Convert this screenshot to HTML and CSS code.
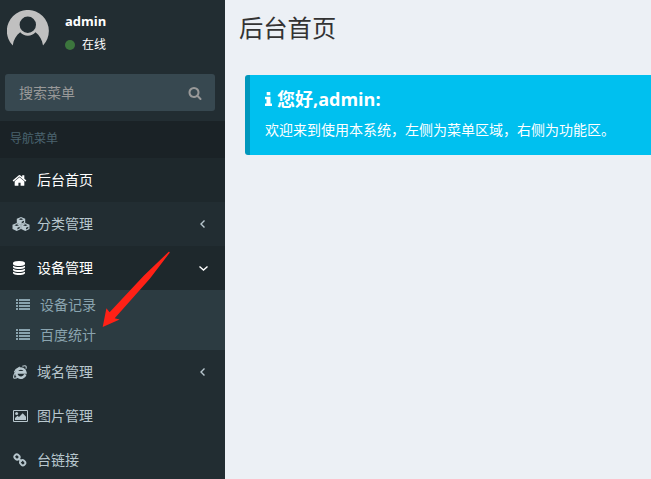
FILE: index.html
```html
<!DOCTYPE html>
<html lang="zh-CN">
<head>
<meta charset="utf-8">
<title>后台首页</title>
<link rel="stylesheet" href="styles.css">
</head>
<body>
<div class="app">
  <aside class="sidebar">
    <div class="user">
      <svg class="avatar" viewBox="0 0 42 42"><path fill="#c0c0c0" fill-rule="evenodd" d="M5.700 35.500A21 21 0 1 1 36 35.500C35.300 30 32.500 25.300 28.500 22.300A10.300 10.300 0 0 1 13.200 22.300C9.200 25.300 6.400 30 5.700 35.500ZM20.800 6.600A8.200 8.200 0 1 0 20.800 23A8.200 8.200 0 1 0 20.800 6.600Z"/></svg>
      <div class="info">
        <div class="name">admin</div>
        <div class="status"><span class="dot"></span>在线</div>
      </div>
    </div>
    <div class="search">
      <span>搜索菜单</span>
      <svg class="icon" viewBox="0 0 1792 1792"><path d="M1216 832q0-185-131.500-316.500t-316.500-131.500-316.500 131.500-131.500 316.500 131.500 316.500 316.500 131.500 316.500-131.500 131.500-316.500zm512 832q0 52-38 90t-90 38q-54 0-90-38l-343-342q-179 124-399 124-143 0-273.500-55.500t-225-150-150-225-55.500-273.500 55.500-273.500 150-225 225-150 273.500-55.500 273.500 55.500 225 150 150 225 55.500 273.500q0 220-124 399l343 343q37 37 37 90z"/></svg>
    </div>
    <div class="nav-header">导航菜单</div>
    <nav>
      <a class="item active">
        <span class="slot"><svg class="icon home" viewBox="0 0 1792 1792"><path d="M1472 992v480q0 26-19 45t-45 19h-384v-384h-256v384h-384q-26 0-45-19t-19-45v-480q0-1 .5-3t.5-3l575-474 575 474q1 2 1 6zm223-69l-62 74q-8 9-21 11h-3q-13 0-21-7l-692-577-692 577q-12 8-24 7-13-2-21-11l-62-74q-8-10-7-23.500t11-21.500l719-599q32-26 76-26t76 26l244 204v-195q0-14 9-23t23-9h192q14 0 23 9t9 23v408l219 182q10 8 11 21.500t-7 23.500z"/></svg></span>
        <span class="label">后台首页</span>
      </a>
      <a class="item">
        <span class="slot"><svg class="icon cubes" viewBox="0 0 18 14">
          <g id="cube"><path d="M9 0 13.200 1.700V6L9 8 4.800 6V1.700Z"/><path class="cut" d="M6.700 2.200 9 1.300 11.300 2.200 9 3.100ZM9.700 4.700 12 3.700V5.300L9.700 6.500Z"/></g>
          <use href="#cube" x="-4.300" y="6"/><use href="#cube" x="4.300" y="6"/>
        </svg></span>
        <span class="label">分类管理</span>
        <svg class="caret" viewBox="0 0 10 10"><path d="M6.500 1.500 3 5 6.500 8.500"/></svg>
      </a>
      <a class="item active">
        <span class="slot"><svg class="icon database" viewBox="0 0 1792 1792"><path d="M896 768q237 0 443-43t325-127v170q0 69-103 128t-280 93.500-385 34.500-385-34.500-280-93.500-103-128v-170q119 84 325 127t443 43zm0 768q237 0 443-43t325-127v170q0 69-103 128t-280 93.500-385 34.500-385-34.500-280-93.500-103-128v-170q119 84 325 127t443 43zm0-384q237 0 443-43t325-127v170q0 69-103 128t-280 93.500-385 34.500-385-34.500-280-93.500-103-128v-170q119 84 325 127t443 43zm0-1152q208 0 385 34.500t280 93.500 103 128v128q0 69-103 128t-280 93.500-385 34.500-385-34.500-280-93.500-103-128v-128q0-69 103-128t280-93.500 385-34.500z"/></svg></span>
        <span class="label">设备管理</span>
        <svg class="caret" viewBox="0 0 10 10"><path d="M1.500 3.500 5.500 7 9.500 3.500"/></svg>
      </a>
      <div class="submenu">
        <a class="subitem"><svg class="icon" viewBox="0 0 14 14"><path id="list" d="M0 1h2v2H0zM3 1h11v2H3zM0 4h2v2H0zM3 4h11v2H3zM0 7h2v2H0zM3 7h11v2H3zM0 10h2v2H0zM3 10h11v2H3z"/></svg><span>设备记录</span></a>
        <a class="subitem"><svg class="icon" viewBox="0 0 14 14"><use href="#list"/></svg><span>百度统计</span></a>
      </div>
      <a class="item">
        <span class="slot"><svg class="icon ie" viewBox="0 0 14 14"><g fill="none" stroke="currentColor"><path stroke-width="2.600" d="M12.300 9.300A4.600 4.600 0 1 1 12.400 7.400H4"/><path stroke-width="1.100" d="M9.300 1.300C12.500 0 14 .8 12.900 3.800M2.200 7.500C.2 11 .1 13.300 1.700 13.300 2.700 13.300 4 12.700 5.300 11.700M1.300 7.300C2.500 4.700 4.500 2.900 7 2"/></g></svg></span>
        <span class="label">域名管理</span>
        <svg class="caret" viewBox="0 0 10 10"><path d="M6.500 1.500 3 5 6.500 8.500"/></svg>
      </a>
      <a class="item">
        <span class="slot"><svg class="icon picture" viewBox="0 0 15 12"><path fill-rule="evenodd" d="M1 0H14Q15 0 15 1V11Q15 12 14 12H1Q0 12 0 11V1Q0 0 1 0ZM1 1V11H14V1Z"/><circle cx="3.600" cy="3.600" r="1.500"/><path d="M2 10V8L4.500 5.700 6 7 9.700 3.300 13 6.700V10Z"/></svg></span>
        <span class="label">图片管理</span>
      </a>
      <a class="item">
        <span class="slot"><svg class="icon link" viewBox="0 0 14 14"><g fill="none" stroke="currentColor" stroke-width="1.900"><rect x="-2.600" y="-2.300" width="5.200" height="4.600" rx="1.700" transform="translate(4 4) rotate(45)"/><rect x="-2.600" y="-2.300" width="5.200" height="4.600" rx="1.700" transform="translate(9.700 9.700) rotate(45)"/><path d="M5 5 8.700 8.700"/></g></svg></span>
        <span class="label">台链接</span>
      </a>
    </nav>
  </aside>
  <main class="content">
    <h1>后台首页</h1>
    <section class="callout">
      <h4><svg class="info-icon" viewBox="0 0 7 14"><path d="M1.700 0H5.300V3.300H1.700ZM0 4.700H5.500V11.500H7V14H0V11.500H1.500V7.200H0Z"/></svg>您好,admin:</h4>
      <p>欢迎来到使用本系统，左侧为菜单区域，右侧为功能区。</p>
    </section>
  </main>
</div>
<svg class="pointer" viewBox="0 0 70 78"><path fill="#ff2116" d="M67.700 .8Q68.800 .5 68.700 1.700L49 27.500 13.700 67.300 18.600 68.500 1.700 76 5.400 57.200 8.600 61.200 43 24.500Z"/></svg>
</body>
</html>
```
FILE: styles.css
```css
* { box-sizing: border-box; }
body {
  margin: 0;
  overflow: hidden;
  background: #ecf0f5;
  font: 14px/20px "Open Sans", "Noto Sans CJK SC", sans-serif;
}
.app { display: flex; height: 479px; overflow: hidden; }
.sidebar { flex: 0 0 225px; background: #222d32; color: #b8c7ce; }
.user { display: flex; height: 74px; padding: 10px 7px; color: #fff; }
.avatar { width: 42px; height: 42px; }
.info { padding-left: 16px; }
.name { font-size: 13px; font-weight: 700; line-height: 22px; }
.status { display: flex; align-items: center; margin-top: 3px; font-size: 12px; }
.dot { width: 10px; height: 10px; margin-right: 7px; border-radius: 50%; background: #3c763d; }
.search {
  display: flex;
  align-items: center;
  justify-content: space-between;
  height: 37px;
  margin: 0 10px 10px 5px;
  padding: 0 13px 0 14px;
  border-radius: 3px;
  background: #374850;
  color: #999;
}
.icon { display: block; flex: none; width: 14px; height: 14px; fill: currentColor; }
.nav-header { height: 37px; padding: 8px 10px; background: #1a2226; color: #4b646f; font-size: 12px; }
.item { display: flex; align-items: center; height: 44px; padding: 0 17px 0 12px; }
.item.active { background: #1e282c; color: #fff; }
.slot { flex: 0 0 25px; }
.label { flex: 1; }
.cubes { width: 18px; }
.home { width: 15px; height: 15px; }
.cut { fill: #222d32; }
.ie, .link { margin-left: 1px; }
.picture { width: 15px; height: 12px; margin-left: 1px; }
.caret { width: 10px; height: 10px; fill: none; stroke: currentColor; stroke-width: 1.4; }
.submenu { background: #2c3b41; color: #8aa4af; }
.subitem { display: flex; align-items: center; gap: 10px; height: 30px; padding-left: 16px; }
.content { flex: 1; min-width: 0; padding: 12px 0 0 14px; }
h1 { margin: 0 0 31px; color: #333; font-size: 24.3px; font-weight: 400; line-height: 32px; }
.callout {
  height: 80px;
  margin-left: 6px;
  padding: 14px 0 0 15px;
  border-left: 5px solid #0097bc;
  border-radius: 3px 0 0 3px;
  background: #00c0ef;
  color: #fff;
}
h4 { display: flex; align-items: center; margin: 0 0 11px; font-size: 18px; font-weight: 700; line-height: 20px; }
.info-icon { width: 7px; height: 14px; margin-right: 5px; fill: currentColor; }
p { margin: 0; white-space: nowrap; }
.pointer { position: absolute; left: 101px; top: 251px; width: 70px; height: 78px; }
```
